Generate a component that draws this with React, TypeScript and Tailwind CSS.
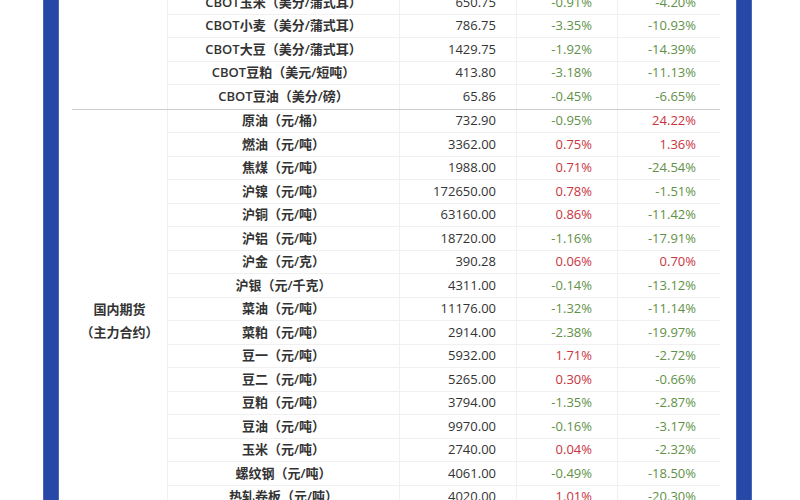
import React from 'react';

type Row = { name: string; price: string; day: string; ytd: string };

const cbotRows: Row[] = [
  { name: 'CBOT玉米（美分/蒲式耳）', price: '650.75', day: '-0.91%', ytd: '-4.20%' },
  { name: 'CBOT小麦（美分/蒲式耳）', price: '786.75', day: '-3.35%', ytd: '-10.93%' },
  { name: 'CBOT大豆（美分/蒲式耳）', price: '1429.75', day: '-1.92%', ytd: '-14.39%' },
  { name: 'CBOT豆粕（美元/短吨）', price: '413.80', day: '-3.18%', ytd: '-11.13%' },
  { name: 'CBOT豆油（美分/磅）', price: '65.86', day: '-0.45%', ytd: '-6.65%' },
];

const domesticRows: Row[] = [
  { name: '原油（元/桶）', price: '732.90', day: '-0.95%', ytd: '24.22%' },
  { name: '燃油（元/吨）', price: '3362.00', day: '0.75%', ytd: '1.36%' },
  { name: '焦煤（元/吨）', price: '1988.00', day: '0.71%', ytd: '-24.54%' },
  { name: '沪镍（元/吨）', price: '172650.00', day: '0.78%', ytd: '-1.51%' },
  { name: '沪铜（元/吨）', price: '63160.00', day: '0.86%', ytd: '-11.42%' },
  { name: '沪铝（元/吨）', price: '18720.00', day: '-1.16%', ytd: '-17.91%' },
  { name: '沪金（元/克）', price: '390.28', day: '0.06%', ytd: '0.70%' },
  { name: '沪银（元/千克）', price: '4311.00', day: '-0.14%', ytd: '-13.12%' },
  { name: '菜油（元/吨）', price: '11176.00', day: '-1.32%', ytd: '-11.14%' },
  { name: '菜粕（元/吨）', price: '2914.00', day: '-2.38%', ytd: '-19.97%' },
  { name: '豆一（元/吨）', price: '5932.00', day: '1.71%', ytd: '-2.72%' },
  { name: '豆二（元/吨）', price: '5265.00', day: '0.30%', ytd: '-0.66%' },
  { name: '豆粕（元/吨）', price: '3794.00', day: '-1.35%', ytd: '-2.87%' },
  { name: '豆油（元/吨）', price: '9970.00', day: '-0.16%', ytd: '-3.17%' },
  { name: '玉米（元/吨）', price: '2740.00', day: '0.04%', ytd: '-2.32%' },
  { name: '螺纹钢（元/吨）', price: '4061.00', day: '-0.49%', ytd: '-18.50%' },
  { name: '热轧卷板（元/吨）', price: '4020.00', day: '1.01%', ytd: '-20.30%' },
  { name: '铁矿石（元/吨）', price: '748.50', day: '1.22%', ytd: '-7.64%' },
];

const pctColor = (v: string) => (v.startsWith('-') ? 'text-[#5f9147]' : 'text-[#c9333d]');

function DataRow({ row, last }: { row: Row; last?: boolean }) {
  return (
    <div
      className={`grid grid-cols-[232px_117px_101px_102px] h-[23.5px] items-center ${
        last ? '' : 'border-b border-[#f0f0f0]'
      }`}
    >
      <div className="h-full flex items-center justify-center border-r border-[#f0f0f0] text-[#333] font-semibold">
        {row.name}
      </div>
      <div className="h-full flex items-center justify-end pr-[20px] border-r border-[#f0f0f0] text-[#333] font-medium">
        {row.price}
      </div>
      <div className={`h-full flex items-center justify-end pr-[25px] border-r border-[#f0f0f0] ${pctColor(row.day)}`}>
        {row.day}
      </div>
      <div className={`h-full flex items-center justify-end pr-[24px] ${pctColor(row.ytd)}`}>
        {row.ytd}
      </div>
    </div>
  );
}

export default function App() {
  return (
    <div
      className="w-[800px] h-[500px] overflow-hidden bg-white flex pl-[43px] text-[13px]"
      style={{ fontFamily: '"Open Sans", "Noto Sans CJK SC", sans-serif' }}
    >
      <div className="w-4 h-full bg-[#2748a6] shrink-0 border-x border-[#4a66b8]" />
      <div className="w-[13px] shrink-0" />
      <div className="w-[648px] shrink-0 -mt-[9px]">
        <div className="flex border-b border-[#cdcdcd]">
          <div className="w-[96px] border-r border-[#f0f0f0]" />
          <div className="flex flex-col">
            {cbotRows.map((r, i) => (
              <DataRow key={r.name} row={r} last={i === cbotRows.length - 1} />
            ))}
          </div>
        </div>
        <div className="flex">
          <div className="w-[96px] border-r border-[#f0f0f0] flex items-center justify-center text-center text-[#333] font-semibold leading-[23px]">
            <div>
              国内期货
              <br />
              （主力合约）
            </div>
          </div>
          <div className="flex flex-col">
            {domesticRows.map((r) => (
              <DataRow key={r.name} row={r} />
            ))}
          </div>
        </div>
      </div>
      <div className="w-4 shrink-0" />
      <div className="w-4 h-full bg-[#2748a6] shrink-0 border-x border-[#4a66b8]" />
    </div>
  );
}
